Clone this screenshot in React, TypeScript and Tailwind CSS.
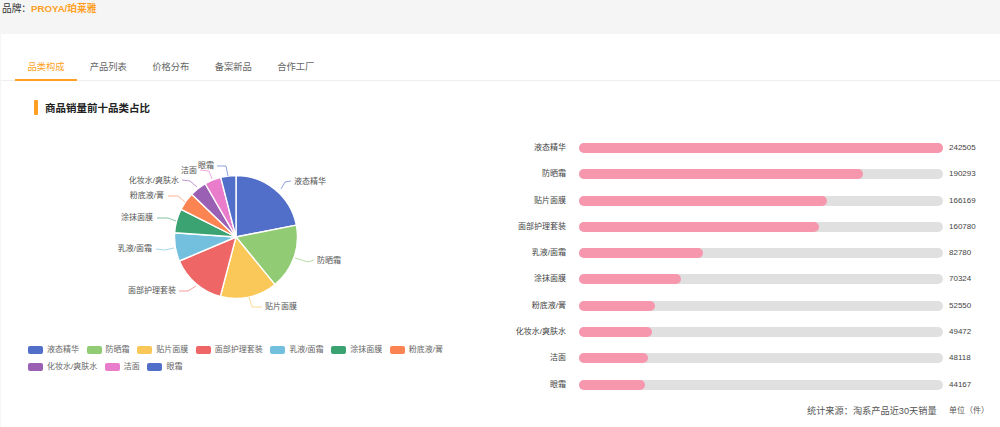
import React from "react";

const font = { fontFamily: '"Liberation Sans", "Noto Sans CJK SC", sans-serif' };

const data: [string, number, string, number][] = [
  ["液态精华", 242505, "#516fc8", 100],
  ["防晒霜", 190293, "#91cc75", 78],
  ["贴片面膜", 166169, "#fac858", 68],
  ["面部护理套装", 160780, "#ee6666", 66],
  ["乳液/面霜", 82780, "#73c0de", 34],
  ["涂抹面膜", 70324, "#3ba272", 28],
  ["粉底液/膏", 52550, "#fc8452", 21],
  ["化妆水/爽肤水", 49472, "#9a60b4", 20],
  ["洁面", 48118, "#ea7ccc", 19],
  ["眼霜", 44167, "#516fc8", 18],
];

const labels: { t: string; x: number; y: number; a: "start" | "end"; line: string }[] = [
  { t: "液态精华", x: 294, y: 181, a: "start", line: "M281 189 L285 182 L291 181" },
  { t: "防晒霜", x: 317, y: 260, a: "start", line: "M295 258 L308 262 L314 260" },
  { t: "贴片面膜", x: 265, y: 306, a: "start", line: "M249 297 L252 307 L262 307" },
  { t: "面部护理套装", x: 176, y: 290, a: "end", line: "M196 286 L188 291 L179 291" },
  { t: "乳液/面霜", x: 152, y: 248, a: "end", line: "M174 248 L165 250 L156 249" },
  { t: "涂抹面膜", x: 153, y: 217, a: "end", line: "M176 221 L168 218 L157 218" },
  { t: "粉底液/膏", x: 164, y: 195, a: "end", line: "M185 202 L178 196 L168 196" },
  { t: "化妆水/爽肤水", x: 179, y: 180, a: "end", line: "M197 187 L190 181 L182 180" },
  { t: "洁面", x: 197, y: 170, a: "end", line: "M212 179 L209 171 L200 170" },
  { t: "眼霜", x: 214, y: 165, a: "end", line: "M228 176 L226 166 L217 166" },
];

const total = data.reduce((s, d) => s + d[1], 0);
const cx = 236;
const cy = 237;
const r = 61.5;

function slices() {
  let a = 0;
  return data.map((d) => {
    const b = a + (d[1] / total) * Math.PI * 2;
    const p = (t: number) => `${cx + r * Math.sin(t)} ${cy - r * Math.cos(t)}`;
    const path = `M${cx} ${cy} L${p(a)} A${r} ${r} 0 ${b - a > Math.PI ? 1 : 0} 1 ${p(b)} Z`;
    a = b;
    return <path key={d[0]} d={path} fill={d[2]} stroke="#ffffff" strokeWidth={1.4} strokeLinejoin="round" />;
  });
}

const tabs = ["品类构成", "产品列表", "价格分布", "备案新品", "合作工厂"];

export default function App() {
  return (
    <div className="w-[1000px] h-[427px] overflow-hidden bg-[#f5f5f5] pl-px" style={font}>
      <div className="h-[34px] -ml-px pl-[2px] pt-[3px] text-[9.7px] leading-[12px] text-[#333]">
        品牌：<span className="font-bold text-[#ff9f24]">PROYA/珀莱雅</span>
      </div>
      <div className="h-[393px] bg-white">
        <div className="pt-[22px] pl-[14px] h-[47px] flex border-b border-[#eeeeee]">
          {tabs.map((t, i) => (
            <div
              key={t}
              className={
                i === 0
                  ? "w-[62px] h-[25px] text-center text-[9.3px] leading-[22px] text-[#ff9f24] border-b-2 border-[#ff9f24]"
                  : "w-[62.5px] h-[25px] text-center text-[9.3px] leading-[22px] text-[#666666]"
              }
            >
              {t}
            </div>
          ))}
        </div>
        <div className="mt-[19px] ml-[33px] flex items-center h-[15px]">
          <div className="w-[4px] h-[15px] bg-[#ff9f24] rounded-[1px]" />
          <div className="ml-[7px] text-[10.5px] leading-[16px] pt-px font-bold text-[#222]">商品销量前十品类占比</div>
        </div>
        <div className="flex">
          <div className="w-[530px] shrink-0 pt-[35px]">
            <svg width="400" height="190" viewBox="100 150 400 190" className="block ml-[99px]">
              {slices()}
              {labels.map((l, i) => (
                <g key={l.t}>
                  <path d={l.line} fill="none" stroke={data[i][2]} strokeWidth={0.8} opacity={0.8} />
                  <text x={l.x} y={l.y + 3} textAnchor={l.a} fontSize={8} fill="#555555">
                    {l.t}
                  </text>
                </g>
              ))}
            </svg>
            <div className="ml-[27px] mt-[5px] w-[440px] flex flex-wrap gap-y-[8px] text-[8px] leading-[9px] text-[#666666]">
              {data.map((d) => (
                <div key={d[0]} className="flex items-center mr-[7.6px]">
                  <span className="w-[15px] h-[8px] rounded-[2px] mr-[4px]" style={{ backgroundColor: d[2] }} />
                  {d[0]}
                </div>
              ))}
            </div>
          </div>
          <div className="flex-1 pt-[28px]">
            <div className="flex flex-col gap-[16.3px]">
              {data.map((d) => (
                <div key={d[0]} className="flex items-center h-[10px] text-[8px] text-[#444444]">
                  <div className="w-[35px] shrink-0 flex justify-end whitespace-nowrap">{d[0]}</div>
                  <div className="ml-[13px] w-[364px] h-[10px] rounded-full bg-[#e0e0e0]">
                    <div className="h-full rounded-full bg-[#f797ad]" style={{ width: `${d[3]}%` }} />
                  </div>
                  <div className="ml-[6px]">{d[1]}</div>
                </div>
              ))}
            </div>
            <div className="mt-[15px] flex text-[9.2px] leading-[12px] text-[#555555] pl-[276px] whitespace-nowrap">
              <span className="w-[142px]">统计来源：淘系产品近30天销量</span>
              <span className="text-[8px]">单位（件）</span>
            </div>
          </div>
        </div>
      </div>
    </div>
  );
}
